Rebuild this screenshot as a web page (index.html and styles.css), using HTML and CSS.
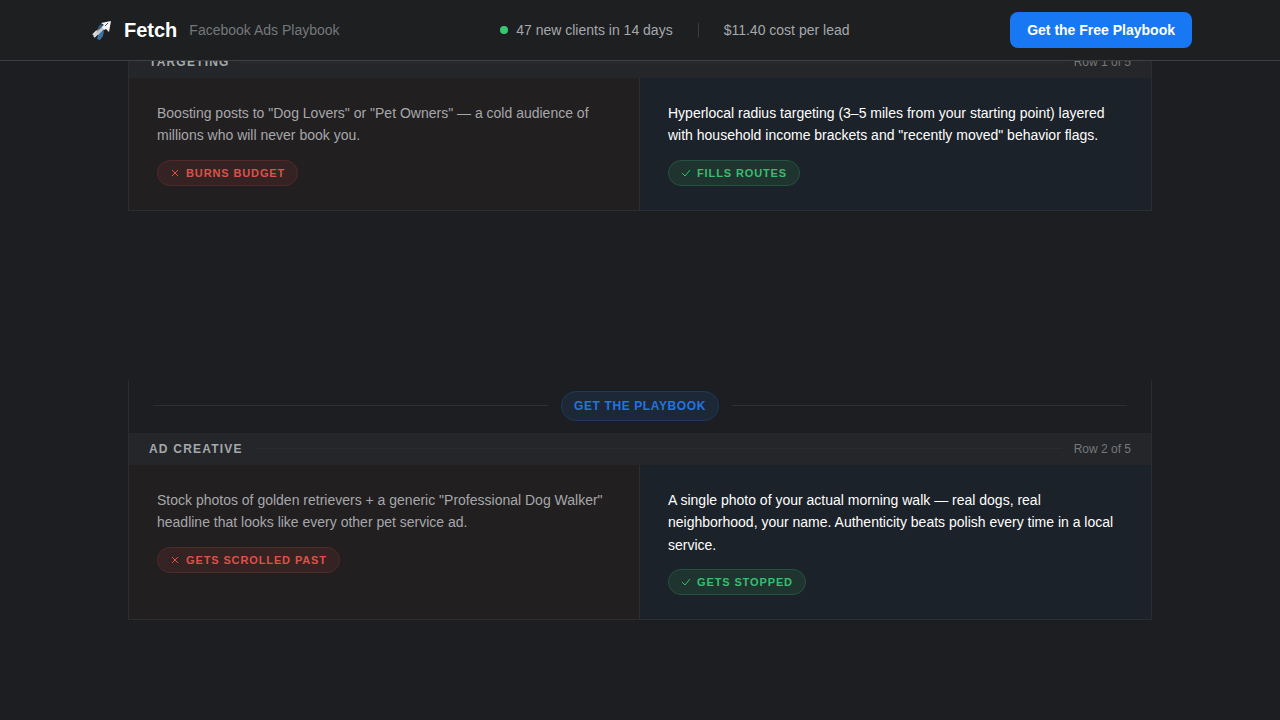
FILE: index.html
```html
<!DOCTYPE html>
<html lang="en">
<head>
  <meta charset="UTF-8" />
  <meta name="viewport" content="width=device-width, initial-scale=1.0" />
  <title>Fetch - Facebook Ads Playbook</title>
  <link rel="stylesheet" href="styles.css">
</head>
<body>
  <header class="topbar">
    <div class="topbar-inner">
      <div class="brand">
        <svg class="brand-icon" viewBox="0 0 24 24" aria-hidden="true">
          <path d="M6 15 L10 11 L13 9 L16 12 L11 17 L8 17 L6 19 Z" fill="#85898b" />
          <path d="M5 17 L9 13 M6 19 L12 13" stroke="#d9dcdd" stroke-width="2" />
          <path d="M10 9 L13 6 L16 8 L11 12 Z" fill="#2f5f86" />
          <path d="M11 15 L16 13 L15 18 L12 22 L9 21 Z" fill="#3873a3" />
          <path d="M9 16 L18 7" stroke="#c3c7c9" stroke-width="3" />
          <path d="M13 5 L23 3 L21 14 L18 11 L16 12 L14 9 L16 7 Z" fill="#f4f5f5" />
          <path d="M17 8 L20 5" stroke="#4a4e51" stroke-width="1" />
        </svg>
        <span class="brand-name">Fetch</span>
        <span class="brand-tag">Facebook Ads Playbook</span>
      </div>
      <div class="stats">
        <span class="stat"><span class="dot"></span>47 new clients in 14 days</span>
        <span class="divider"></span>
        <span class="stat">$11.40 cost per lead</span>
      </div>
      <button class="cta-btn" type="button">Get the Free Playbook</button>
    </div>
  </header>

  <main class="comparison">
    <section class="row">
      <div class="row-head">
        <h2>Targeting</h2>
        <span class="rule"></span>
        <span class="row-count">Row 1 of 5</span>
      </div>
      <div class="row-body">
        <div class="cell cell-bad">
          <p>Boosting posts to "Dog Lovers" or "Pet Owners" — a cold audience of millions who will never book you.</p>
          <span class="badge badge-bad">
            <svg viewBox="0 0 10 10" aria-hidden="true"><path d="M2 2 L8 8 M8 2 L2 8" /></svg>
            Burns Budget
          </span>
        </div>
        <div class="cell cell-good">
          <p>Hyperlocal radius targeting (3–5 miles from your starting point) layered with household income brackets and "recently moved" behavior flags.</p>
          <span class="badge badge-good">
            <svg viewBox="0 0 10 10" aria-hidden="true"><path d="M1 5 L4 8 L9 2" /></svg>
            Fills Routes
          </span>
        </div>
      </div>
    </section>

    <section class="row">
      <div class="row-cta">
        <a href="#playbook">Get the Playbook</a>
      </div>
      <div class="row-head">
        <h2>Ad Creative</h2>
        <span class="rule"></span>
        <span class="row-count">Row 2 of 5</span>
      </div>
      <div class="row-body">
        <div class="cell cell-bad">
          <p>Stock photos of golden retrievers + a generic "Professional Dog Walker" headline that looks like every other pet service ad.</p>
          <span class="badge badge-bad">
            <svg viewBox="0 0 10 10" aria-hidden="true"><path d="M2 2 L8 8 M8 2 L2 8" /></svg>
            Gets Scrolled Past
          </span>
        </div>
        <div class="cell cell-good">
          <p>A single photo of your actual morning walk — real dogs, real neighborhood, your name. Authenticity beats polish every time in a local service.</p>
          <span class="badge badge-good">
            <svg viewBox="0 0 10 10" aria-hidden="true"><path d="M1 5 L4 8 L9 2" /></svg>
            Gets Stopped
          </span>
        </div>
      </div>
    </section>
  </main>
</body>
</html>
```
FILE: styles.css
```css
* {
  box-sizing: border-box;
}

body {
  margin: 0;
  background: #1c1e21;
  color: #fff;
  font-family: "Liberation Sans", Arial, sans-serif;
  font-size: 14px;
}

/* top bar, stays above the rows while scrolling */
.topbar {
  position: fixed;
  top: 0;
  left: 0;
  right: 0;
  z-index: 10;
  background: #1d1f21;
  border-bottom: 1px solid #3e4042;
}

.topbar-inner {
  display: flex;
  justify-content: space-between;
  align-items: center;
  max-width: 1152px;
  margin: 0 auto;
  padding: 12px 24px;
}

.brand {
  display: flex;
  align-items: center;
}

.brand-icon {
  width: 24px;
  height: 24px;
  margin-right: 12px;
}

.brand-name {
  font-size: 20px;
  font-weight: bold;
  margin-right: 12px;
}

.brand-tag {
  color: #75787b;
}

.stats {
  display: flex;
  align-items: center;
  gap: 25px;
  color: #a5a8ab;
}

.stat {
  display: flex;
  align-items: center;
  gap: 8px;
}

.dot {
  width: 8px;
  height: 8px;
  border-radius: 50%;
  background: #37c871;
}

.divider {
  width: 1px;
  height: 14px;
  background: #3a3c3f;
}

.cta-btn {
  height: 36px;
  padding: 0 17px;
  border: none;
  border-radius: 8px;
  background: #1877f2;
  color: #fff;
  font-family: inherit;
  font-size: 14px;
  font-weight: bold;
  cursor: pointer;
}

.comparison {
  display: flex;
  flex-direction: column;
  gap: 169px;
  max-width: 1024px;
  margin: 0 auto;
  padding: 46px 0 100px;
}

.row {
  border: 1px solid #2b2e30;
  border-top: none;
}

.row-cta {
  display: flex;
  align-items: center;
  gap: 13px;
  padding: 11px 24px 12px;
}

.row-cta::before,
.row-cta::after {
  content: "";
  flex: 1;
  height: 1px;
  background: #2d3033;
}

.row-cta a {
  padding: 0 12px;
  border: 1px solid #1c3a5c;
  border-radius: 15px;
  background: #1c2835;
  color: #2374e1;
  font-size: 12px;
  font-weight: bold;
  line-height: 28px;
  letter-spacing: 0.05em;
  text-transform: uppercase;
  text-decoration: none;
}

.row-head {
  display: flex;
  align-items: center;
  gap: 12px;
  height: 32px;
  padding: 0 20px;
  background: #242629;
}

.row-head h2 {
  margin: 0;
  color: #a5a8ab;
  font-size: 12px;
  letter-spacing: 0.1em;
  text-transform: uppercase;
}

.rule {
  flex: 1;
  height: 1px;
  background: #2a2c2f;
}

.row-count {
  color: #75787b;
  font-size: 12px;
}

.row-body {
  display: grid;
  grid-template-columns: 1fr 1fr;
}

.cell {
  padding: 24px 28px;
}

.cell p {
  margin: 0 0 13px;
  line-height: 1.6;
}

.cell-bad {
  background: #221f20;
  border-right: 1px solid #2b2e30;
  color: #a5a8ab;
}

.cell-good {
  background: #1c2229;
}

.badge {
  display: flex;
  align-items: center;
  gap: 6px;
  width: fit-content;
  padding: 0 12px;
  border: 1px solid;
  border-radius: 13px;
  font-size: 11px;
  font-weight: bold;
  line-height: 24px;
  letter-spacing: 0.08em;
  text-transform: uppercase;
}

.badge svg {
  width: 10px;
  height: 10px;
  fill: none;
  stroke: currentColor;
  stroke-width: 1;
}

.badge-bad {
  background: #352324;
  border-color: #51292a;
  color: #dc5247;
}

.badge-good {
  background: #1f332f;
  border-color: #255240;
  color: #37be70;
}
```
